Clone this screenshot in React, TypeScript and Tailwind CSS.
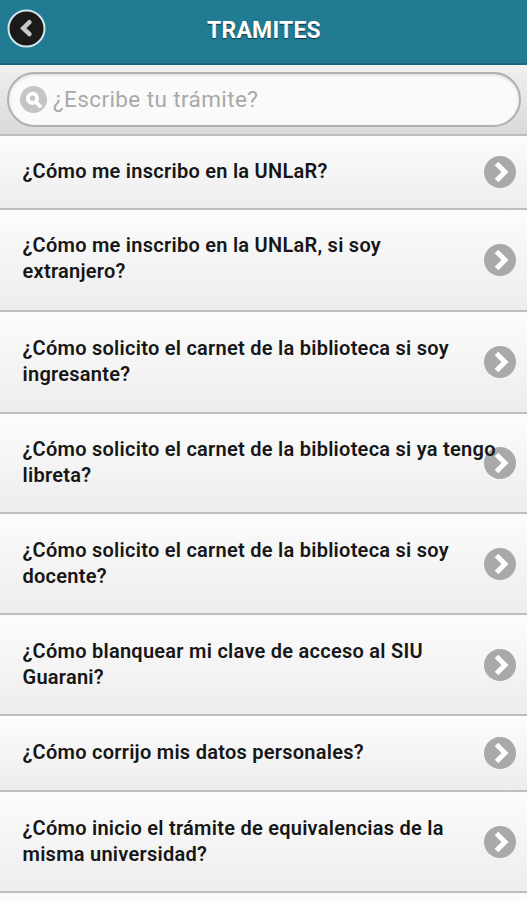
import React from "react";

interface Tramite {
  id: number;
  lines: string[];
  rowClass: string;
}

const tramites: Tramite[] = [
  { id: 1, lines: ["¿Cómo me inscribo en la UNLaR?"], rowClass: "h-[74px] pt-[22px]" },
  { id: 2, lines: ["¿Cómo me inscribo en la UNLaR, si soy", "extranjero?"], rowClass: "h-[102px] pt-[22px]" },
  { id: 3, lines: ["¿Cómo solicito el carnet de la biblioteca si soy", "ingresante?"], rowClass: "h-[102px] pt-[23px]" },
  { id: 4, lines: ["¿Cómo solicito el carnet de la biblioteca si ya tengo", "libreta?"], rowClass: "h-[100px] pt-[22px]" },
  { id: 5, lines: ["¿Cómo solicito el carnet de la biblioteca si soy", "docente?"], rowClass: "h-[101px] pt-[23px]" },
  { id: 6, lines: ["¿Cómo blanquear mi clave de acceso al SIU", "Guarani?"], rowClass: "h-[101px] pt-[23px]" },
  { id: 7, lines: ["¿Cómo corrijo mis datos personales?"], rowClass: "h-[76px] pt-[23px]" },
  { id: 8, lines: ["¿Cómo inicio el trámite de equivalencias de la", "misma universidad?"], rowClass: "h-[101px] pt-[23px]" },
];

const ArrowIcon: React.FC = () => (
  <svg
    className="absolute right-[11px] top-1/2 -mt-4 h-8 w-8"
    viewBox="0 0 32 32"
    fill="none"
  >
    <circle cx="16" cy="16" r="16" fill="#a9a9a9" />
    <path d="M12.5 7.5 L21 16 L12.5 24.5" stroke="#fff" strokeWidth="5" />
  </svg>
);

const Header: React.FC = () => (
  <header className="relative flex h-[65px] items-center justify-center border-b-2 border-[#1b6479] bg-[#207b93] pb-[2px]">
    <button className="absolute left-[7px] top-[9px]" aria-label="Volver">
      <svg className="h-[39px] w-[39px]" viewBox="0 0 39 39" fill="none">
        <circle cx="19.5" cy="19.5" r="18" fill="#1c1a19" stroke="#d3e7ec" strokeWidth="2" />
        <path
          d="M22.5 13.2 L16.2 19.2 L22.5 25.2"
          stroke="#c9c9c9"
          strokeWidth="4.4"
          strokeLinecap="round"
        />
      </svg>
    </button>
    <h1 className="pl-px text-[23px] font-bold leading-[30px] tracking-[0.2px] text-white [text-shadow:0_1px_1px_#0b3440]">
      TRAMITES
    </h1>
  </header>
);

const SearchBar: React.FC = () => (
  <div className="h-[71px] border-b-2 border-[#bcbcbc] bg-linear-to-b from-[#f0f0f0] to-[#dadada] pl-[7px] pr-[6px] pt-[7px]">
    <label className="flex h-[55px] items-center rounded-full border-2 border-[#b0b0b0] bg-[#fafafa] pl-[11px] shadow-[inset_0_1px_3px_rgba(0,0,0,0.15)]">
      <svg className="h-[27px] w-[27px] shrink-0" viewBox="0 0 27 27" fill="none">
        <circle cx="13.5" cy="13.5" r="13.5" fill="#c5c5c5" />
        <circle cx="12.5" cy="12.3" r="4.6" stroke="#fff" strokeWidth="3.8" />
        <path d="M15.8 15.8 L21 21.2" stroke="#fff" strokeWidth="3.6" />
      </svg>
      <input
        type="text"
        placeholder="¿Escribe tu trámite?"
        className="mb-[2px] ml-[6px] w-full bg-transparent text-[22.5px] leading-7 tracking-[0.4px] outline-none placeholder:text-[#a9a9a9]"
      />
    </label>
  </div>
);

const App: React.FC = () => {
  return (
    <div className="h-[900px] overflow-hidden bg-[#fafafa] font-['Roboto',sans-serif]">
      <Header />
      <SearchBar />
      <ul>
        {tramites.map((tramite) => (
          <li
            key={tramite.id}
            className={`relative border-b-2 border-[#bebebe] bg-linear-to-b from-[#fcfcfc] to-[#ededed] pl-[22.5px] ${tramite.rowClass}`}
          >
            <ArrowIcon />
            <p className="relative whitespace-nowrap text-[20px] font-semibold leading-[26px] tracking-[0.26px] text-[#161616]">
              {tramite.lines.map((line) => (
                <span key={line} className="block">
                  {line}
                </span>
              ))}
            </p>
          </li>
        ))}
      </ul>
    </div>
  );
};

export default App;
